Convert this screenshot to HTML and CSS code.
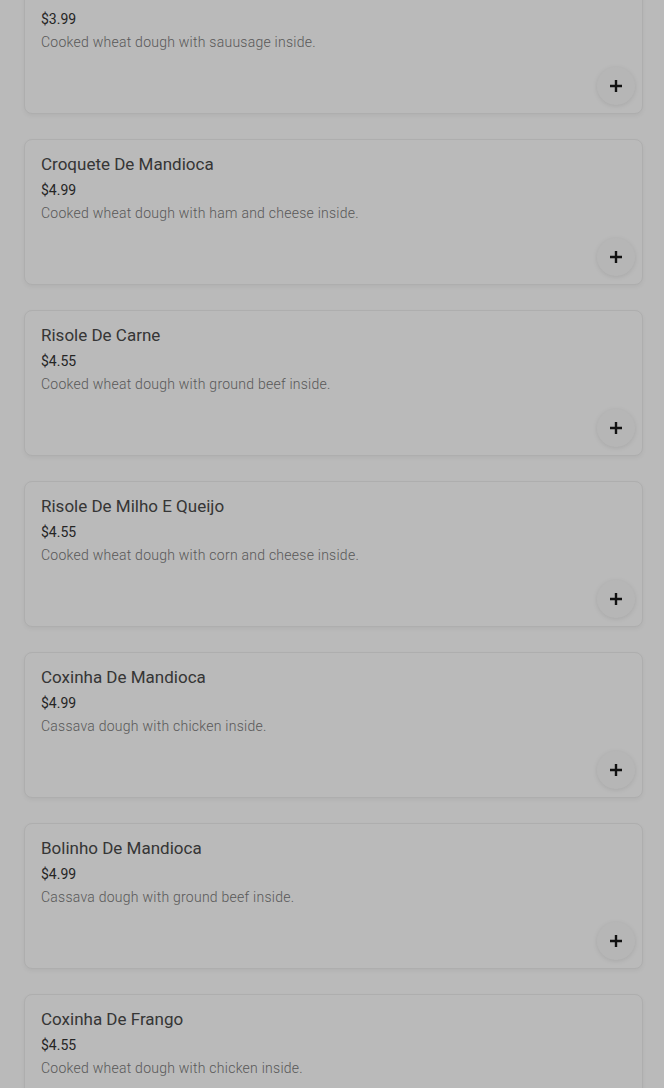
FILE: index.html
```html
<!DOCTYPE html>
<html lang="en">
<head>
    <meta charset="UTF-8">
    <meta name="viewport" content="width=device-width, initial-scale=1.0">
    <title>Menu</title>
    <link rel="stylesheet" href="styles.css">
</head>
<body>
    <div class="menu-list">
        <div class="menu-item">
            <h3>Enroladinho De Salsicha</h3>
            <p class="price">$3.99</p>
            <p class="desc">Cooked wheat dough with sauusage inside.</p>
            <div class="item-actions"><button class="add-btn" aria-label="Add"><svg viewBox="0 0 12 12"><path d="M6 0v12M0 6h12"/></svg></button></div>
        </div>
        <div class="menu-item">
            <h3>Croquete De Mandioca</h3>
            <p class="price">$4.99</p>
            <p class="desc">Cooked wheat dough with ham and cheese inside.</p>
            <div class="item-actions"><button class="add-btn" aria-label="Add"><svg viewBox="0 0 12 12"><path d="M6 0v12M0 6h12"/></svg></button></div>
        </div>
        <div class="menu-item">
            <h3>Risole De Carne</h3>
            <p class="price">$4.55</p>
            <p class="desc">Cooked wheat dough with ground beef inside.</p>
            <div class="item-actions"><button class="add-btn" aria-label="Add"><svg viewBox="0 0 12 12"><path d="M6 0v12M0 6h12"/></svg></button></div>
        </div>
        <div class="menu-item">
            <h3>Risole De Milho E Queijo</h3>
            <p class="price">$4.55</p>
            <p class="desc">Cooked wheat dough with corn and cheese inside.</p>
            <div class="item-actions"><button class="add-btn" aria-label="Add"><svg viewBox="0 0 12 12"><path d="M6 0v12M0 6h12"/></svg></button></div>
        </div>
        <div class="menu-item">
            <h3>Coxinha De Mandioca</h3>
            <p class="price">$4.99</p>
            <p class="desc">Cassava dough with chicken inside.</p>
            <div class="item-actions"><button class="add-btn" aria-label="Add"><svg viewBox="0 0 12 12"><path d="M6 0v12M0 6h12"/></svg></button></div>
        </div>
        <div class="menu-item">
            <h3>Bolinho De Mandioca</h3>
            <p class="price">$4.99</p>
            <p class="desc">Cassava dough with ground beef inside.</p>
            <div class="item-actions"><button class="add-btn" aria-label="Add"><svg viewBox="0 0 12 12"><path d="M6 0v12M0 6h12"/></svg></button></div>
        </div>
        <div class="menu-item">
            <h3>Coxinha De Frango</h3>
            <p class="price">$4.55</p>
            <p class="desc">Cooked wheat dough with chicken inside.</p>
            <div class="item-actions"><button class="add-btn" aria-label="Add"><svg viewBox="0 0 12 12"><path d="M6 0v12M0 6h12"/></svg></button></div>
        </div>
    </div>
    <div class="backdrop"></div>
</body>
</html>
```

FILE: styles.css
```css
html {
    box-sizing: border-box;
}

body {
    margin: 0;
    background: white;
    font-family: Roboto, "Liberation Sans", sans-serif;
    overflow: hidden;
    height: 1088px;
}

.menu-list {
    display: flex;
    flex-direction: column;
    gap: 25px;
    padding: 0 21px 0 24px;
    margin-top: -32px;
}

.menu-item {
    background: white;
    border: 1px solid #efefef;
    border-radius: 8px;
    box-shadow: 0 2px 4px rgba(0, 0, 0, 0.05);
    padding: 12px 7px 8px 16px;
}

.menu-item h3 {
    margin: 0 0 4px;
    font-size: 17px;
    line-height: 24px;
    font-weight: 400;
    color: #4a4a4a;
}

.price {
    margin: 0 0 3px;
    font-size: 14px;
    line-height: 20px;
    color: #333;
}

.desc {
    margin: 0;
    font-size: 14px;
    line-height: 20px;
    font-weight: 300;
    letter-spacing: 0.25px;
    color: #7a7a7a;
}

.item-actions {
    display: flex;
    justify-content: flex-end;
    margin-top: 15px;
}

.add-btn {
    width: 38px;
    height: 38px;
    border: none;
    border-radius: 50%;
    background: #fafafa;
    box-shadow: 0 1px 5px rgba(0, 0, 0, 0.1);
    display: flex;
    align-items: center;
    justify-content: center;
    padding: 0;
    cursor: pointer;
}

.add-btn svg {
    width: 12px;
    height: 12px;
    stroke: #1a1a1a;
    stroke-width: 2.4;
    fill: none;
}

.backdrop {
    position: fixed;
    inset: 0;
    background: rgba(0, 0, 0, 0.27);
}
```
